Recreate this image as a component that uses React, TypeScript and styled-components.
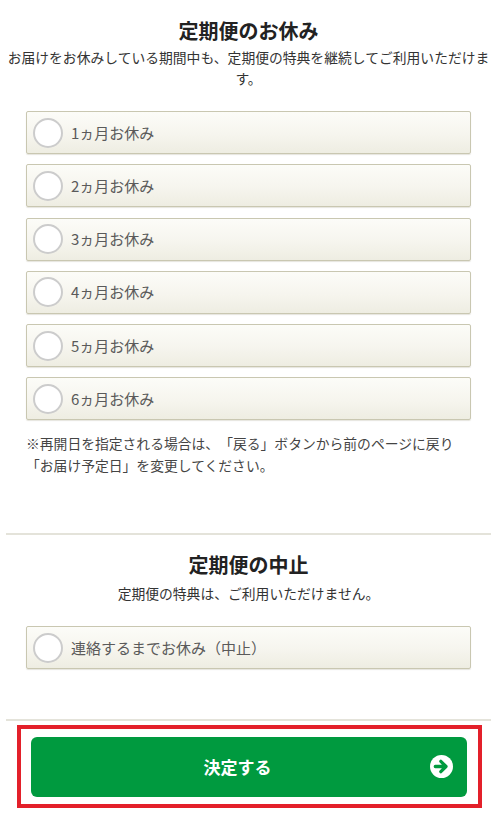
import React, { useState } from "react";
import styled, { createGlobalStyle } from "styled-components";

const GlobalStyle = createGlobalStyle`
  html, body {
    margin: 0;
    padding: 0;
    background: #ffffff;
  }
  body {
    font-family: "Noto Sans CJK JP", "Noto Sans", "Liberation Sans", sans-serif;
    color: #333333;
    text-spacing-trim: space-all;
  }
  * { box-sizing: border-box; }
`;

const Page = styled.div`
  width: 485px;
  margin-left: 6px;
  padding-top: 17px;
`;

const Section = styled.section<{ $top?: number }>`
  display: flex;
  flex-direction: column;
  margin-top: ${(p) => p.$top ?? 0}px;
`;

const Title = styled.h2`
  margin: 0;
  font-size: 20px;
  line-height: 28px;
  font-weight: 700;
  color: #222222;
  text-align: center;
`;

const Lead = styled.p<{ $gap: number }>`
  margin: ${(p) => p.$gap}px 0 0;
  font-size: 13.8px;
  line-height: 21px;
  color: #333333;
  text-align: center;
`;

const OptionList = styled.div`
  display: flex;
  flex-direction: column;
  gap: 10.27px;
  margin: 22.5px 20px 0;
`;

const Option = styled.label`
  display: flex;
  align-items: center;
  gap: 8px;
  height: 43px;
  padding: 0 6px;
  border: 1px solid #c9c7b1;
  border-radius: 2px;
  background: linear-gradient(to bottom, #fcfcf8 0%, #f6f5ee 55%, #eeede2 100%);
  box-shadow: 0 1px 1px rgba(150, 148, 120, 0.25);
  cursor: pointer;
`;

const Radio = styled.span<{ $on: boolean }>`
  flex: none;
  width: 30px;
  height: 30px;
  border-radius: 50%;
  border: 2px solid #cccccc;
  background: #ffffff;
  display: flex;
  align-items: center;
  justify-content: center;
  &::after {
    content: "";
    width: 14px;
    height: 14px;
    border-radius: 50%;
    background: ${(p) => (p.$on ? "#009a3f" : "transparent")};
  }
`;

const OptionText = styled.span`
  font-size: 15px;
  line-height: 20px;
  color: #5a5a5a;
`;

const Note = styled.p`
  margin: 11.7px 20px 0;
  font-size: 13.8px;
  line-height: 22px;
  color: #444444;
`;

const Divider = styled.hr<{ $top: number }>`
  margin: ${(p) => p.$top}px 0 0;
  border: 0;
  height: 2px;
  background: #e4e3da;
`;

const Highlight = styled.div`
  margin: 4px 9px 0 11px;
  border: 4px solid #e3202a;
  padding: 8px 11px 7px 10px;
`;

const Submit = styled.button`
  position: relative;
  width: 100%;
  height: 60px;
  border: 0;
  border-radius: 6px;
  background: #009a3f;
  color: #ffffff;
  font-family: "Noto Sans CJK JP", "Noto Sans", sans-serif;
  font-size: 17px;
  font-weight: 700;
  padding: 0 46px 0 23px;
  display: flex;
  align-items: center;
  justify-content: center;
  cursor: pointer;
`;

const ArrowBadge = styled.span`
  position: absolute;
  right: 14px;
  top: 50%;
  width: 23px;
  height: 23px;
  margin-top: -11.5px;
  display: flex;
`;

const ArrowIcon = () => (
  <svg width="23" height="23" viewBox="0 0 24 24" aria-hidden="true">
    <circle cx="12" cy="12" r="12" fill="#ffffff" />
    <path
      d="M5.5 12h10.5M11.3 6.6L16.7 12l-5.4 5.4"
      fill="none"
      stroke="#009a3f"
      strokeWidth="3.4"
      strokeLinecap="round"
      strokeLinejoin="round"
    />
  </svg>
);

const pauses = ["1ヵ月お休み", "2ヵ月お休み", "3ヵ月お休み", "4ヵ月お休み", "5ヵ月お休み", "6ヵ月お休み"];

export default function App() {
  const [choice, setChoice] = useState<string | null>(null);

  return (
    <>
      <GlobalStyle />
      <Page>
        <Section>
          <Title>定期便のお休み</Title>
          <Lead $gap={1.5}>
            お届けをお休みしている期間中も、定期便の特典を継続してご利用いただけます。
          </Lead>
          <OptionList>
            {pauses.map((label) => (
              <Option key={label} onClick={() => setChoice(label)}>
                <Radio $on={choice === label} />
                <OptionText>{label}</OptionText>
              </Option>
            ))}
          </OptionList>
          <Note>
            ※再開日を指定される場合は、「戻る」ボタンから前のページに戻り
            <br />
            「お届け予定日」を変更してください。
          </Note>
        </Section>

        <Divider $top={56.5} />

        <Section $top={16.5}>
          <Title>定期便の中止</Title>
          <Lead $gap={3.5}>定期便の特典は、ご利用いただけません。</Lead>
          <OptionList>
            <Option onClick={() => setChoice("stop")}>
              <Radio $on={choice === "stop"} />
              <OptionText>連絡するまでお休み（中止）</OptionText>
            </Option>
          </OptionList>
        </Section>

        <Divider $top={49.5} />

        <Highlight>
          <Submit type="button">
            決定する
            <ArrowBadge>
              <ArrowIcon />
            </ArrowBadge>
          </Submit>
        </Highlight>
      </Page>
    </>
  );
}
